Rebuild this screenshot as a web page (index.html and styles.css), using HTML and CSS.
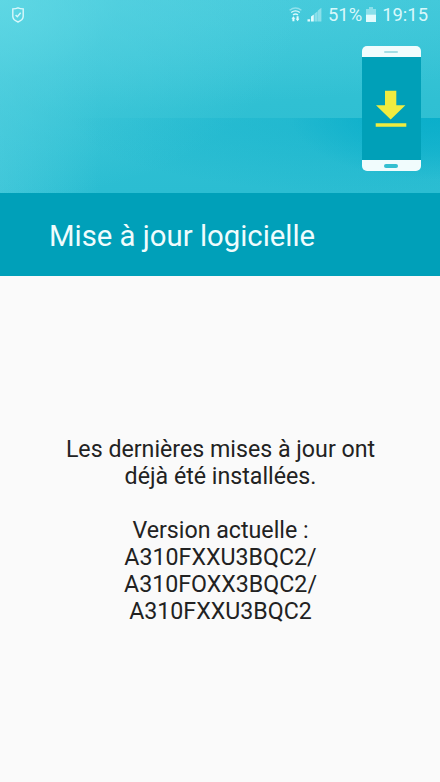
FILE: index.html
```
<!DOCTYPE html>
<html lang="fr">
<head>
  <meta charset="UTF-8">
  <meta name="viewport" content="width=device-width, initial-scale=1.0">
  <title>Mise à jour logicielle</title>
  <link rel="stylesheet" href="styles.css">
</head>
<body>
<header class="hero">
  <div class="status-bar">
    <svg class="icon-shield" width="12" height="16" viewBox="0 0 12 16">
      <path d="M6 .9Q8 1.9 11.2 1.9V9.5Q11.2 12.8 6 15Q.8 12.8 .8 9.5V1.9Q4 1.9 6 .9Z"/>
      <path d="M3.6 8l1.7 1.8L8.7 5.8"/>
    </svg>
    <div class="status-right">
      <svg class="icon-wifi" width="13" height="15" viewBox="0 0 13 15">
        <path class="faint" d="M.6 3.2Q6.5-1.2 12.4 3.2"/>
        <path d="M2.2 5.5Q6.5 2.3 10.8 5.5M4 7.9Q6.5 6 9 7.9"/>
        <path class="fill" d="M4.4 9.2L6.3 11.7H5.4V14.3H3.4V11.7H2.5ZM8.6 14.3L6.7 11.8H7.6V9.2H9.6V11.8H10.5Z"/>
      </svg>
      <svg class="icon-signal" width="15" height="15" viewBox="0 0 15 15">
        <path class="on" d="M.5 12.2h2.6V14.5H.5ZM4 9.6l2.8-2V14.5H4Z"/>
        <path class="off" d="M7.4 6.8l3.2-2.6V14.5H7.4ZM10.9 3.6L14.4.8V14.5h-3.5Z"/>
      </svg>
      <span class="battery-level">51%</span>
      <svg class="icon-battery" width="10" height="15" viewBox="0 0 10 15">
        <path class="off" d="M3 0h4v2h3v5.5H0V2h3Z"/>
        <path class="on" d="M0 7.5h10V15H0Z"/>
      </svg>
      <span class="clock">19:15</span>
    </div>
  </div>
  <div class="phone">
    <div class="phone-top"><span class="speaker"></span></div>
    <div class="phone-screen">
      <svg width="32" height="38" viewBox="0 0 32 38">
        <path d="M10 .7h11.3v14.5h9.1L15.7 29.4 1 15.2h9ZM.7 33.2h30.6v3.5H.7Z"/>
      </svg>
    </div>
    <div class="phone-bottom"><span class="home-key"></span></div>
  </div>
</header>
<div class="title-bar">
  <h1>Mise à jour logicielle</h1>
</div>
<main class="message">
  <p>Les dernières mises à jour ont<br>déjà été installées.</p>
  <p>Version actuelle :<br>A310FXXU3BQC2/<br>A310FOXX3BQC2/<br>A310FXXU3BQC2</p>
</main>
</body>
</html>
```
FILE: styles.css
```
* { box-sizing: border-box; }
body {
  margin: 0;
  font-family: Roboto, "Liberation Sans", sans-serif;
  background: #fafafa;
  color: #222;
  display: flex;
  flex-direction: column;
  min-height: 100vh;
}
.hero {
  height: 193px;
  display: flex;
  flex-direction: column;
  /* horizon line 118px down, fading out to the left */
  background:
    radial-gradient(ellipse 150px 62px at 100% 0, rgba(0,170,200,0.7) 0, rgba(0,170,200,0.45) 50%, rgba(0,170,200,0) 100%) 0 118px / 100% 75px no-repeat,
    radial-gradient(ellipse 290px 75px at 82% 0, rgba(14,175,203,0.5) 0, rgba(14,175,203,0.3) 45%, rgba(14,175,203,0) 100%) 0 118px / 100% 75px no-repeat,
    radial-gradient(ellipse 300px 200px at 0 0, rgba(98,217,229,0.8) 0, rgba(88,210,225,0.45) 40%, rgba(70,202,220,0) 100%),
    linear-gradient(90deg, rgba(84,208,224,0.5) 0, rgba(84,208,224,0) 100px),
    radial-gradient(ellipse 480px 110px at 25% 0, rgba(90,212,226,0.45) 0, rgba(90,212,226,0) 100%),
    linear-gradient(#3fc7d9 0, #30c0d3 100px, #2bbdd2 193px);
}
.status-bar {
  height: 29px;
  padding: 0 12px;
  display: flex;
  align-items: center;
  justify-content: space-between;
  color: #d9f8fb;
}
.status-right {
  display: flex;
  align-items: center;
}
.status-bar svg {
  display: block;
  stroke: none;
  fill: #e2fbfd;
}
.status-bar .icon-shield,
.status-bar .icon-wifi {
  fill: none;
  stroke: #d9f8fb;
  stroke-width: 1.4;
}
.status-bar .icon-wifi .fill {
  fill: #e2fbfd;
  stroke: none;
}
.icon-wifi .faint {
  opacity: 0.5;
}
.icon-signal {
  margin-left: 5px;
}
.off {
  opacity: 0.45;
}
.battery-level,
.clock {
  font-size: 18.4px;
  line-height: 29px;
}
.battery-level {
  margin-left: 6px;
}
.icon-battery {
  margin-left: 4px;
}
.clock {
  margin-left: 6px;
}
.phone {
  width: 59.5px;
  height: 125px;
  margin: 17px 19px 0 auto;
  border-radius: 5px;
  overflow: hidden;
  display: flex;
  flex-direction: column;
  background: #f1fcfd;
}
.phone-top,
.phone-bottom {
  height: 11px;
  display: flex;
  align-items: center;
  justify-content: center;
}
.speaker {
  width: 14px;
  height: 2px;
  border-radius: 1px;
  background: #a6dde4;
}
.home-key {
  width: 14px;
  height: 4px;
  border-radius: 2px;
  background: #35bfd0;
}
.phone-screen {
  flex: 1;
  display: flex;
  align-items: center;
  justify-content: center;
  background: #00a0b8;
}
.phone-screen svg {
  fill: #f0ec3f;
}
.title-bar {
  height: 83px;
  padding: 2px 49px 0;
  display: flex;
  align-items: center;
  background: #00a0b9;
}
.title-bar h1 {
  margin: 0;
  font-size: 29.3px;
  font-weight: 400;
  color: #f0fcfd;
}
.message {
  padding: 160px 0 0 1px;
  text-align: center;
  font-size: 23.2px;
  line-height: 27px;
}
.message p {
  margin: 0 0 27px;
}
```
